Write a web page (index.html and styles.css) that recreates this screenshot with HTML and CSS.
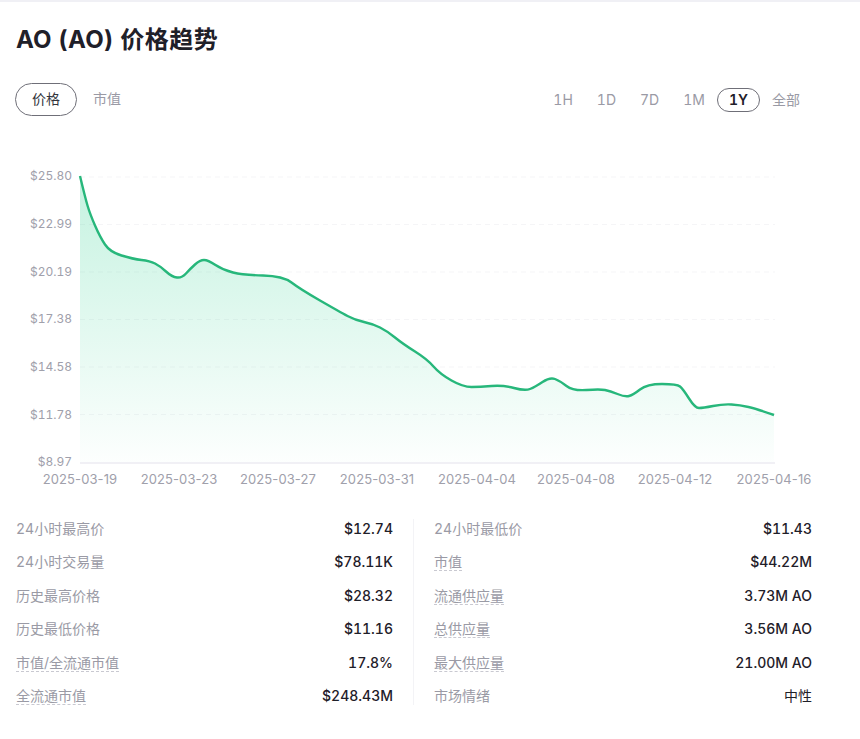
FILE: index.html
```html
<!DOCTYPE html>
<html lang="zh-CN">
<head>
  <meta charset="UTF-8">
  <meta name="viewport" content="width=device-width, initial-scale=1.0">
  <title>AO (AO) 价格趋势</title>
  <link rel="stylesheet" href="styles.css">
</head>
<body>
  <section class="price-panel">
    <h2 class="panel-title"><span class="title-name">AO (AO)</span> 价格趋势</h2>

    <div class="chart-controls">
      <div class="metric-tabs">
        <span class="metric-tab active">价格</span>
        <span class="metric-tab">市值</span>
      </div>
      <div class="range-tabs">
        <span class="range-tab">1H</span>
        <span class="range-tab">1D</span>
        <span class="range-tab">7D</span>
        <span class="range-tab">1M</span>
        <span class="range-tab active">1Y</span>
        <span class="range-tab">全部</span>
      </div>
    </div>

    <svg class="chart" viewBox="0 140 860 355" width="860" height="355">
      <defs>
        <linearGradient id="area-fill" x1="0" y1="0" x2="0" y2="1">
          <stop offset="0" stop-color="#1fce88" stop-opacity="0.26"/>
          <stop offset="1" stop-color="#1fce88" stop-opacity="0.01"/>
        </linearGradient>
      </defs>

      <g class="grid">
        <line x1="80" y1="178" x2="775" y2="178"/>
        <line x1="80" y1="225.5" x2="775" y2="225.5"/>
        <line x1="80" y1="273" x2="775" y2="273"/>
        <line x1="80" y1="320.5" x2="775" y2="320.5"/>
        <line x1="80" y1="368" x2="775" y2="368"/>
        <line x1="80" y1="415.5" x2="775" y2="415.5"/>
      </g>

      <path class="area" fill="url(#area-fill)" d="M80 177Q85 198 87.5 206.5Q90 215 95 226.5Q100 238 105 245.5Q110 253 121.5 256.5Q133 260 141.5 261Q150 262 155 264.5Q160 267 166 272.5Q172 278 177 278.5Q182 279 186 274.5Q190 270 195 265.5Q200 261 204 261Q208 261 215.5 266Q223 271 233 273.5Q243 276 263 276.5Q283 277 291.5 283.5Q300 290 320 301.5Q340 313 347.5 317Q355 321 364 323Q373 325 380 328.5Q387 332 395 338.5Q403 345 415 352.5Q427 360 433.5 367.5Q440 375 451.5 381.5Q463 388 471.5 388Q480 388 491.5 387Q503 386 514 389Q525 392 530 390Q535 388 542.5 383Q550 378 555 380Q560 382 566.5 387Q573 392 586.5 391Q600 390 605 391Q610 392 617.5 395Q625 398 629 397Q633 396 640 390.5Q647 385 662 385Q677 385 680 387.5Q683 390 689 399.5Q695 409 699 409Q703 409 713 407Q723 405 731.5 405.5Q740 406 748.5 408Q757 410 774 416V464H80Z"/>
      <path class="line" d="M80 177Q85 198 87.5 206.5Q90 215 95 226.5Q100 238 105 245.5Q110 253 121.5 256.5Q133 260 141.5 261Q150 262 155 264.5Q160 267 166 272.5Q172 278 177 278.5Q182 279 186 274.5Q190 270 195 265.5Q200 261 204 261Q208 261 215.5 266Q223 271 233 273.5Q243 276 263 276.5Q283 277 291.5 283.5Q300 290 320 301.5Q340 313 347.5 317Q355 321 364 323Q373 325 380 328.5Q387 332 395 338.5Q403 345 415 352.5Q427 360 433.5 367.5Q440 375 451.5 381.5Q463 388 471.5 388Q480 388 491.5 387Q503 386 514 389Q525 392 530 390Q535 388 542.5 383Q550 378 555 380Q560 382 566.5 387Q573 392 586.5 391Q600 390 605 391Q610 392 617.5 395Q625 398 629 397Q633 396 640 390.5Q647 385 662 385Q677 385 680 387.5Q683 390 689 399.5Q695 409 699 409Q703 409 713 407Q723 405 731.5 405.5Q740 406 748.5 408Q757 410 774 416"/>
      <line class="axis" x1="80" y1="464" x2="775" y2="464"/>

      <g class="y-labels">
        <text x="72" y="180">$25.80</text>
        <text x="72" y="228">$22.99</text>
        <text x="72" y="276">$20.19</text>
        <text x="72" y="323">$17.38</text>
        <text x="72" y="371">$14.58</text>
        <text x="72" y="419">$11.78</text>
        <text x="72" y="466">$8.97</text>
      </g>
      <g class="x-labels">
        <text x="80" y="485">2025-03-19</text>
        <text x="179" y="485">2025-03-23</text>
        <text x="278" y="485">2025-03-27</text>
        <text x="377" y="485">2025-03-31</text>
        <text x="477" y="485">2025-04-04</text>
        <text x="576" y="485">2025-04-08</text>
        <text x="675" y="485">2025-04-12</text>
        <text x="774" y="485">2025-04-16</text>
      </g>
    </svg>

    <div class="stats">
      <dl class="stats-col">
        <div class="stat"><dt>24小时最高价</dt><dd>$12.74</dd></div>
        <div class="stat"><dt>24小时交易量</dt><dd>$78.11K</dd></div>
        <div class="stat"><dt>历史最高价格</dt><dd>$28.32</dd></div>
        <div class="stat"><dt>历史最低价格</dt><dd>$11.16</dd></div>
        <div class="stat"><dt class="hint">市值/全流通市值</dt><dd>17.8%</dd></div>
        <div class="stat"><dt class="hint">全流通市值</dt><dd>$248.43M</dd></div>
      </dl>
      <dl class="stats-col">
        <div class="stat"><dt>24小时最低价</dt><dd>$11.43</dd></div>
        <div class="stat"><dt class="hint">市值</dt><dd>$44.22M</dd></div>
        <div class="stat"><dt class="hint">流通供应量</dt><dd>3.73M AO</dd></div>
        <div class="stat"><dt class="hint">总供应量</dt><dd>3.56M AO</dd></div>
        <div class="stat"><dt class="hint">最大供应量</dt><dd>21.00M AO</dd></div>
        <div class="stat"><dt>市场情绪</dt><dd class="plain">中性</dd></div>
      </dl>
    </div>
  </section>
</body>
</html>
```

FILE: styles.css
```css
* {
  box-sizing: border-box;
}

body {
  margin: 0;
  background: #fff;
  color: #1f2029;
  font-family: Inter, "Noto Sans CJK SC", sans-serif;
  font-variant-numeric: tabular-nums;
}

.price-panel {
  border-top: 2px solid #f0f0f5;
  padding: 0 48px 0 16px;
  height: 739px;
}

.panel-title {
  margin: 0;
  padding-top: 21px;
  font-size: 24px;
  line-height: 34px;
  font-weight: 700;
  letter-spacing: 0.5px;
}

.title-name {
  letter-spacing: 0.2px;
}

.chart-controls {
  display: flex;
  justify-content: space-between;
  align-items: center;
  margin-top: 26px;
  margin-left: -1px;
  height: 33px;
}

.metric-tabs,
.range-tabs {
  display: flex;
  align-items: center;
}

.metric-tab {
  height: 33px;
  padding: 0 16px;
  border: 1px solid transparent;
  border-radius: 17px;
  font-size: 14px;
  line-height: 29px;
  color: #9a9aa5;
}

.metric-tab.active {
  border-color: #6f6f78;
  color: #33333c;
}

.metric-tab + .metric-tab {
  margin-left: -1px;
}

.range-tab {
  height: 24px;
  padding: 0 11px;
  border: 1px solid transparent;
  border-radius: 12px;
  font-size: 14px;
  line-height: 21px;
  color: #9a9aa5;
}

.range-tab.active {
  border-color: #6f6f78;
  color: #1f2029;
  font-weight: 600;
}

.chart {
  display: block;
  margin: 23px 0 0 -16px;
}

.grid line {
  stroke: #f5f5f7;
  stroke-width: 1;
  stroke-dasharray: 5 4;
}

.line {
  fill: none;
  stroke: #27b77b;
  stroke-width: 2.4;
}

.axis {
  stroke: #ecebf2;
  stroke-width: 1.5;
}

.y-labels text,
.x-labels text {
  fill: #a0a0ab;
}

.y-labels text {
  font-size: 12px;
  text-anchor: end;
  transform: translateY(1px);
}

.x-labels text {
  font-size: 13px;
  font-variant-numeric: normal;
  letter-spacing: 0.1px;
  text-anchor: middle;
}

.stats {
  display: grid;
  grid-template-columns: 397px 1fr;
  margin-top: 25px;
}

.stats-col {
  display: flex;
  flex-direction: column;
  gap: 14.4px;
  margin: 0;
  padding-right: 20px;
}

.stats-col + .stats-col {
  border-left: 1px solid #f3f3f6;
  padding: 0 0 0 20px;
}

.stat {
  display: flex;
  justify-content: space-between;
  align-items: flex-start;
  height: 19px;
}

.stat dt {
  padding-top: 1px;
  font-size: 14px;
  line-height: 17px;
  color: #9a9aa5;
}

.stat dt.hint {
  border-bottom: 1px dashed #c9c9d1;
}

.stat dd {
  margin: 0;
  padding-top: 1px;
  font-size: 14px;
  line-height: 17px;
  font-weight: 500;
  color: #1f2029;
}

.stat dd.plain {
  font-weight: 400;
}
```
